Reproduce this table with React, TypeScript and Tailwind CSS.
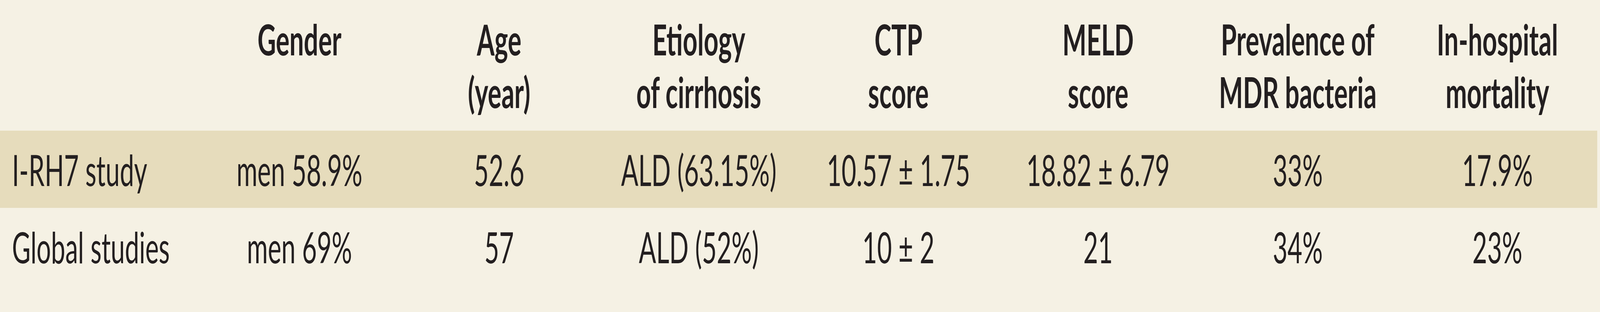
import React, { useEffect, useState } from "react";

const headers: string[][] = [
  [],
  ["Gender"],
  ["Age", "(year)"],
  ["Etiology", "of cirrhosis"],
  ["CTP", "score"],
  ["MELD", "score"],
  ["Prevalence of", "MDR bacteria"],
  ["In-hospital", "mortality"],
];

const rows: { label: string; values: string[]; band: boolean }[] = [
  {
    label: "I-RH7 study",
    values: ["men 58.9%", "52.6", "ALD (63.15%)", "10.57 ± 1.75", "18.82 ± 6.79", "33%", "17.9%"],
    band: true,
  },
  {
    label: "Global studies",
    values: ["men 69%", "57", "ALD (52%)", "10 ± 2", "21", "34%", "23%"],
    band: false,
  },
];

const DESIGN_WIDTH = 6905;

export default function App() {
  const [k, setK] = useState(1);
  useEffect(() => {
    const update = () => setK(Math.min(1, window.innerWidth / DESIGN_WIDTH));
    update();
    window.addEventListener("resize", update);
    return () => window.removeEventListener("resize", update);
  }, []);

  return (
    <div className="h-[800px] w-full overflow-hidden bg-[#f5f1e4]">
      <div
        className="w-[6905px] h-[800px] origin-top-left text-[#231f20] text-[110px] leading-[135px]"
        style={{ fontFamily: 'Lato, "Open Sans", sans-serif', transform: `scaleX(${k})` }}
      >
        <div className="w-[6893px]">
          <div className="grid grid-cols-8 h-[335px] pt-[32px] font-bold">
            {headers.map((h, i) => (
              <div key={i} className="flex flex-col items-center text-center whitespace-nowrap">
                {h.map((line, j) => (
                  <span key={j}>{line}</span>
                ))}
              </div>
            ))}
          </div>
          {rows.map((r, ri) => (
            <div
              key={ri}
              className={
                r.band
                  ? "grid grid-cols-8 h-[198px] pt-[32px] bg-[#e6dcbc]"
                  : "grid grid-cols-8 h-[198px] pt-[32px]"
              }
            >
              <div className="pl-[52px] whitespace-nowrap">{r.label}</div>
              {r.values.map((v, vi) => (
                <div key={vi} className="text-center whitespace-nowrap">
                  {v}
                </div>
              ))}
            </div>
          ))}
        </div>
      </div>
    </div>
  );
}
